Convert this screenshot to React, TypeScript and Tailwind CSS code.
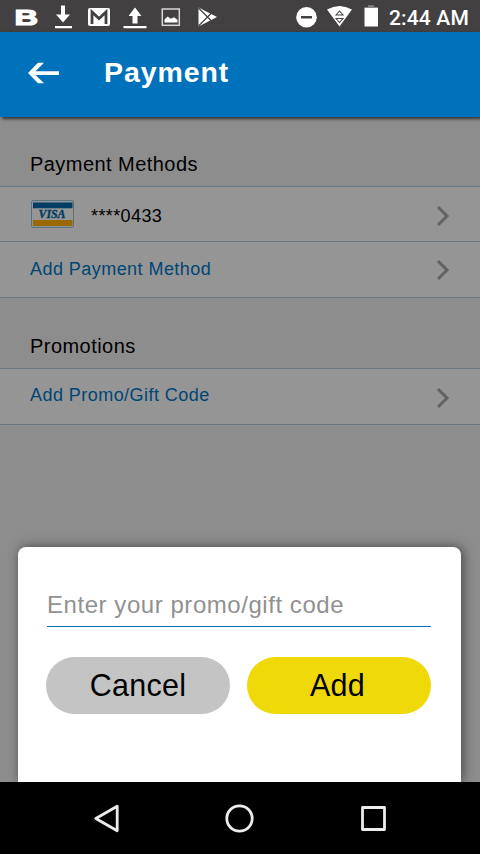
import type { ReactNode } from "react";

const sans = "font-['Liberation_Sans',Arial,sans-serif]";

function StatusBar() {
  return (
    <div className="flex h-8 shrink-0 items-center bg-[#424041] text-white">
      <svg width="220" height="32" viewBox="0 0 220 32" fill="#fff" className="shrink-0">
        <text x="0" y="0" transform="translate(14.4 24.6) scale(1.48 1)" fontFamily="Liberation Sans, Arial, sans-serif" fontWeight="700" fontSize="22" stroke="#fff" strokeWidth="1.2">B</text>
        <path d="M61 5.500h4v9h5l-7 8-7-8h5zM55 26h17v2.200H55z" />
        <rect x="88" y="8" width="22" height="18" rx="2" />
        <path d="M92 24V12l7 6.500 7-6.500v12" fill="none" stroke="#424041" strokeWidth="2.800" />
        <path d="M135 7.500l6.500 8.500h-4v7.500h-5V16H128.500zM123.500 26h23v2.200h-23z" />
        <rect x="162.300" y="9" width="17" height="16.300" fill="none" stroke="#d8d8d8" strokeWidth="1.500" />
        <path d="M164.500 22.500v-3l3.200-3 3 2.300 3.300-1.500 3.500 2.500v2.700z" />
        <path d="M198.500 7.500L217 17l-18.500 9.500z" />
        <path d="M198.500 8l14 14M198.500 26l14-14" fill="none" stroke="#424041" strokeWidth="1.200" />
      </svg>
      <svg width="90" height="32" viewBox="290 0 90 32" fill="#fff" className="ml-[70px] shrink-0">
        <circle cx="306.500" cy="17.300" r="10.300" />
        <path d="M301 16h11v2.500h-11z" fill="#424041" />
        <path d="M327 9.500q12.500-7 25 0L339.500 26.500z" />
        <path d="M336 15l3.500-4 3.500 4zM336 18.500l3.500 4 3.500-4z" fill="none" stroke="#424041" strokeWidth="1.100" />
        <path d="M364.500 8h13.500v18.500h-13.500z" />
        <path d="M364.500 8V7h3.500V5.300h6V7h4v1z" fill="#858384" />
      </svg>
      <span className="ml-[9px] mt-[3px] whitespace-nowrap font-[Roboto,sans-serif] text-[21px] font-medium leading-8 tracking-[0.15px]">2:44 AM</span>
    </div>
  );
}

function Header() {
  return (
    <header className="relative z-10 flex h-[85px] shrink-0 items-center bg-[#0071bb] text-white shadow-[2px_2px_3px_#333]">
      <svg width="32" height="22" viewBox="0 0 32 22" className="ml-7 mt-[-4px]">
        <path d="M0 11L10 .8h6L7.500 9.200H31v3.800H7.500l8.500 8.300h-6z" fill="#fff" />
      </svg>
      <h1 className="ml-[44px] mt-[-5px] text-[28.5px] font-bold leading-9 tracking-[0.9px]">Payment</h1>
    </header>
  );
}

function VisaCard() {
  return (
    <svg width="44" height="28" viewBox="0 0 44 28" className="mr-[17px]">
      <rect x="1.500" y=".6" width="42" height="26.800" rx="1.500" fill="#969696" stroke="#557282" strokeWidth="1" />
      <path d="M3 2.500h39.500v5.800H3z" fill="#003d65" />
      <path d="M3 20h39.500v6H3z" fill="#9b6904" />
      <text x="8.500" y="18.200" textLength="27" lengthAdjust="spacingAndGlyphs" fontFamily="Liberation Serif, serif" fontWeight="700" fontStyle="italic" fontSize="13" fill="#003d65" stroke="#003d65" strokeWidth=".4">VISA</text>
    </svg>
  );
}

function Row({ children, className }: { children: ReactNode; className: string }) {
  return (
    <div className={`flex items-center border-b border-[#657884] px-[30px] text-lg ${className}`}>
      {children}
      <svg width="14" height="22" viewBox="0 0 14 22" className="ml-auto mt-[3px]">
        <path d="M2 2l9 9-9 9" fill="none" stroke="#626262" strokeWidth="3" />
      </svg>
    </div>
  );
}

function PromoDialog() {
  return (
    <div className="absolute bottom-0 left-[18px] h-[235.500px] w-[442.500px] rounded-t-[8px] bg-white pl-7 pr-[30px] shadow-[2px_0_12px_rgba(0,0,0,0.5)]">
      <div className="ml-px mt-[41px] h-[39.500px] border-b-[1.500px] border-[#0071bb] text-[24px] leading-[33px] tracking-[0.55px] text-[#919191]">
        Enter your promo/gift code
      </div>
      <div className="mt-[29.500px] flex justify-between text-[30.5px] text-black">
        <button className="h-[57px] w-[184px] rounded-full bg-[#c4c4c4] pt-[2px] tracking-[0.3px]">Cancel</button>
        <button className="h-[57px] w-[184px] rounded-full bg-[#f0d908] pr-[2px] pt-[2px] tracking-[0.3px]">Add</button>
      </div>
    </div>
  );
}

function NavBar() {
  return (
    <nav className="h-[72px] shrink-0 bg-black">
      <svg width="480" height="72" viewBox="0 0 480 72" fill="none" stroke="#ececec" strokeWidth="2.800" strokeLinejoin="round">
        <path d="M117.200 24.200v24.600L95.800 36.500z" />
        <circle cx="239.500" cy="36.500" r="12.700" />
        <rect x="362.500" y="25.500" width="22" height="22" />
      </svg>
    </nav>
  );
}

export default function App() {
  return (
    <div className={`flex h-[854px] w-[480px] flex-col overflow-hidden bg-[#8d8d8d] ${sans}`}>
      <StatusBar />
      <Header />
      <main className="relative flex-1 overflow-hidden">
        <h2 className="h-[70px] border-b border-[#657884] pl-[30px] pt-[35px] text-[20px] leading-6 tracking-[0.45px]">Payment Methods</h2>
        <div className="bg-[#959595]">
          <Row className="h-[55px]">
            <VisaCard />
            <span className="mt-[3px] tracking-[0.4px]">****0433</span>
          </Row>
          <Row className="h-14 pb-[2px]">
            <span className="tracking-[0.45px] text-[#004673]">Add Payment Method</span>
          </Row>
        </div>
        <h2 className="h-[71px] border-b border-[#657884] pl-[30px] pt-[36px] text-[20px] leading-6 tracking-[0.45px]">Promotions</h2>
        <div className="bg-[#959595]">
          <Row className="h-14">
            <span className="-mt-1 tracking-[0.45px] text-[#004673]">Add Promo/Gift Code</span>
          </Row>
        </div>
        <PromoDialog />
      </main>
      <NavBar />
    </div>
  );
}
